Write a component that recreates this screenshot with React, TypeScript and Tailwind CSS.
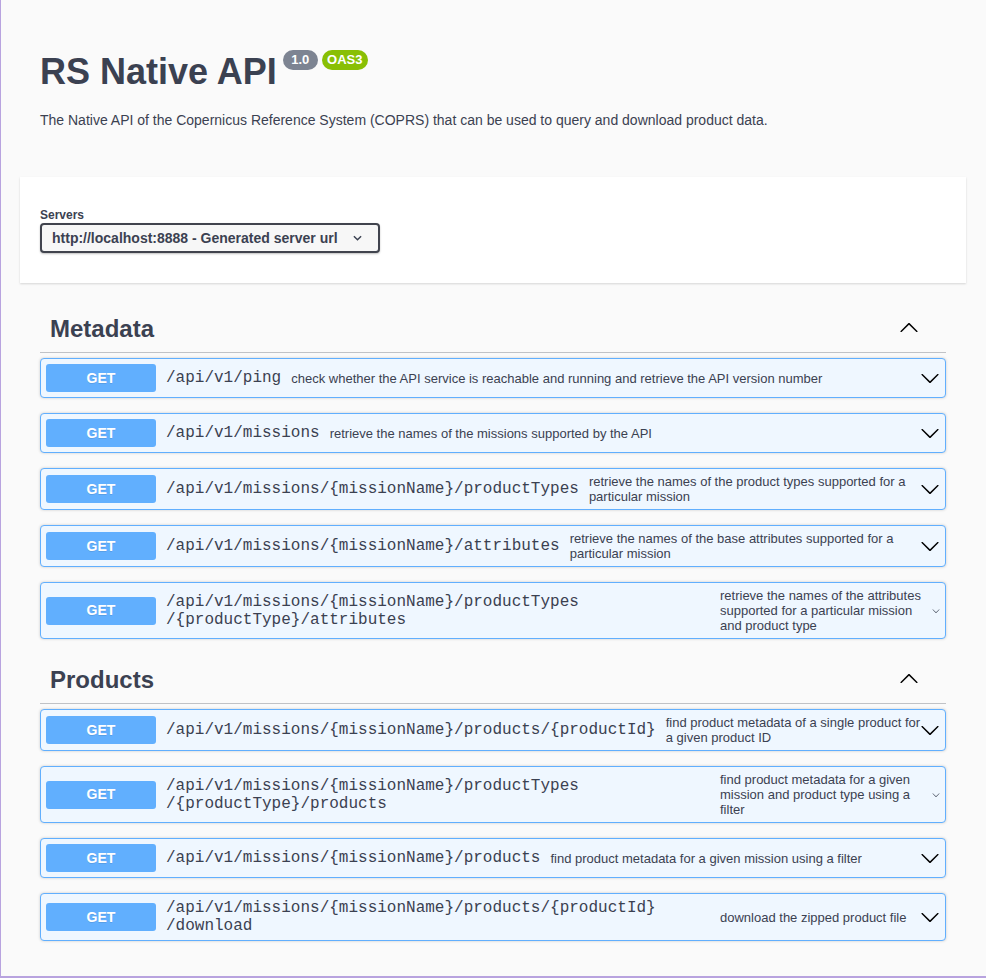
import React from 'react';

type Op = {
  path: string[];
  desc: string;
  tiny?: boolean;
};

const metadataOps: Op[] = [
  {
    path: ['/api/v1/ping'],
    desc: 'check whether the API service is reachable and running and retrieve the API version number',
  },
  {
    path: ['/api/v1/missions'],
    desc: 'retrieve the names of the missions supported by the API',
  },
  {
    path: ['/api/v1/missions/{missionName}/productTypes'],
    desc: 'retrieve the names of the product types supported for a particular mission',
  },
  {
    path: ['/api/v1/missions/{missionName}/attributes'],
    desc: 'retrieve the names of the base attributes supported for a particular mission',
  },
  {
    path: ['/api/v1/missions/{missionName}/productTypes', '/{productType}/attributes'],
    desc: 'retrieve the names of the attributes supported for a particular mission and product type',
    tiny: true,
  },
];

const productOps: Op[] = [
  {
    path: ['/api/v1/missions/{missionName}/products/{productId}'],
    desc: 'find product metadata of a single product for a given product ID',
  },
  {
    path: ['/api/v1/missions/{missionName}/productTypes', '/{productType}/products'],
    desc: 'find product metadata for a given mission and product type using a filter',
    tiny: true,
  },
  {
    path: ['/api/v1/missions/{missionName}/products'],
    desc: 'find product metadata for a given mission using a filter',
  },
  {
    path: ['/api/v1/missions/{missionName}/products/{productId}', '/download'],
    desc: 'download the zipped product file',
  },
];

const ARROW =
  'M17.418 6.109c.272-.268.709-.268.979 0s.271.701 0 .969l-7.908 7.83c-.27.268-.707.268-.979 0l-7.908-7.83c-.27-.268-.27-.701 0-.969.271-.268.709-.268.979 0L10 13.25l7.418-7.141z';

const Arrow = ({ className }: { className: string }) => (
  <svg viewBox="0 0 20 20" className={className} fill="currentColor">
    <path d={ARROW} />
  </svg>
);

const OpBlock = ({ op }: { op: Op }) => {
  const wrapped = op.path.length > 1;
  return (
    <div className="mb-[15px] rounded-[4px] border border-[#61affe] bg-[#eff7ff] shadow-[0_0_3px_rgba(0,0,0,0.19)]">
      <div className="flex items-center p-[5px]">
        <div className="flex h-[28px] w-[110px] shrink-0 items-center justify-center rounded-[3px] bg-[#61affe] text-[14px] font-bold text-white [text-shadow:0_1px_0_rgba(0,0,0,0.1)]">
          GET
        </div>
        <div
          className={`px-[10px] font-['Liberation_Mono',monospace] text-[16px] leading-[18px] text-[#3b4151] ${
            wrapped ? 'w-[564px] shrink-0' : 'shrink-0'
          }`}
        >
          {op.path.map((line) => (
            <div key={line} className="whitespace-nowrap">
              {line}
            </div>
          ))}
        </div>
        <div className="relative z-10 mr-[-3px] min-w-0 flex-1 text-[13px] leading-[15px] text-[#3b4151]">
          {op.desc}
        </div>
        {op.tiny ? (
          <Arrow className="h-[8px] w-[8px] shrink-0 text-[#3b4151]" />
        ) : (
          <Arrow className="h-[20px] w-[20px] shrink-0 text-black" />
        )}
      </div>
    </div>
  );
};

const TagSection = ({ title, ops, className }: { title: string; ops: Op[]; className: string }) => (
  <div className={className}>
    <div className="mb-[5px] flex h-[47px] items-center justify-between border-b border-[#3b4151]/30 pl-[10px] pr-[27px]">
      <h3 className="text-[24px] font-bold text-[#3b4151]">{title}</h3>
      <Arrow className="mb-[3px] h-[20px] w-[20px] rotate-180 text-black" />
    </div>
    {ops.map((op) => (
      <OpBlock key={op.path.join('') + op.desc} op={op} />
    ))}
  </div>
);

export default function App() {
  return (
    <div className="h-[978px] w-[986px] overflow-hidden border-b-2 border-l border-[#b8a3df] bg-[#fafafa] font-['Liberation_Sans',Arial,sans-serif] text-[#3b4151]">
      <div className="pl-[19px] pr-[20px]">
        {/* Info */}
        <div className="px-[20px] pt-[51px]">
          <div className="flex items-start">
            <h2 className="text-[36px] leading-[41px] font-bold text-[#3b4151]">RS Native API</h2>
            <span className="mt-[-1px] ml-[6px] flex h-[20px] w-[35px] items-center justify-center rounded-full bg-[#7d8492] text-[13px] font-bold text-white">
              1.0
            </span>
            <span className="mt-[-1px] ml-[4px] flex h-[20px] w-[46px] items-center justify-center rounded-full bg-[#89bf04] text-[13px] font-bold text-white">
              OAS3
            </span>
          </div>
          <p className="mt-[18px] text-[14px] leading-[20px] text-[#3b4151]">
            The Native API of the Copernicus Reference System (COPRS) that can be used to query and download product data.
          </p>
        </div>

        {/* Servers */}
        <div className="mt-[47px] bg-white px-[20px] pt-[32px] pb-[30px] shadow-[0_1px_2px_0_rgba(0,0,0,0.15)]">
          <div className="text-[12px] leading-[13px] font-bold text-[#3b4151]">Servers</div>
          <div className="mt-[1px] flex h-[30px] w-[340px] items-center justify-between rounded-[4px] border-2 border-[#41444e] bg-[#f7f7f7] pl-[10px] pr-[16px] shadow-[0_1px_2px_0_rgba(0,0,0,0.25)]">
            <span className="text-[14px] font-bold text-[#3b4151]">http://localhost:8888 - Generated server url</span>
            <svg viewBox="0 0 10 6" className="h-[6px] w-[9px]" fill="none" stroke="#3b4151" strokeWidth="1.6">
              <path d="M1 1l4 4 4-4" />
            </svg>
          </div>
        </div>

        {/* Operations */}
        <div className="px-[20px]">
          <TagSection title="Metadata" ops={metadataOps} className="mt-[23px]" />
          <TagSection title="Products" ops={productOps} className="mt-[18px]" />
        </div>
      </div>
    </div>
  );
}
